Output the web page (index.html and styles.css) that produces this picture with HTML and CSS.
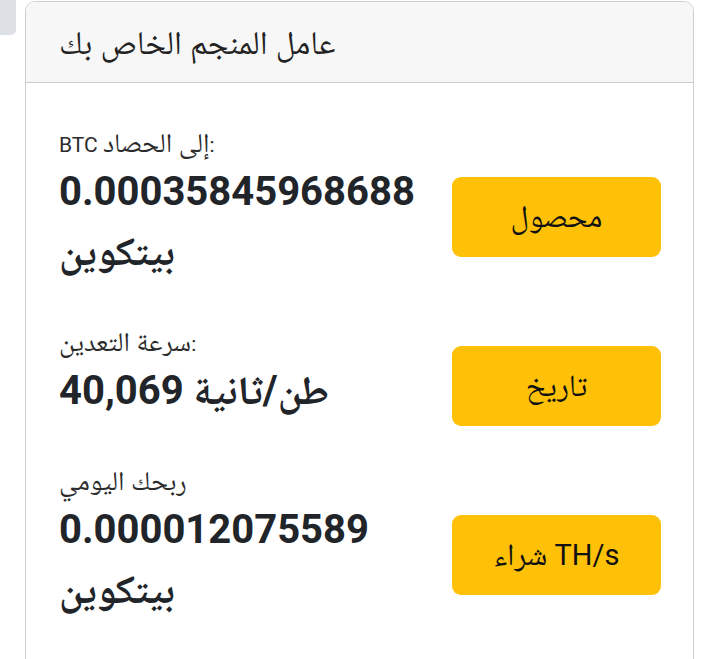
FILE: index.html
```html
<!DOCTYPE html>
<html lang="ar">
<head>
<meta charset="utf-8">
<link rel="stylesheet" href="styles.css">
</head>
<body>
<div class="page">
  <div class="stub"></div>
  <div class="card">
    <div class="card-header">
      <h5 class="card-title">عامل المنجم الخاص بك</h5>
    </div>
    <div class="card-body">
      <div class="row row-1">
        <div class="info">
          <div class="label">BTC <span class="ar">إلى الحصاد</span>:</div>
          <div class="value">0.00035845968688 بيتكوين</div>
        </div>
        <div class="action"><button class="btn"><span class="btn-text"><span class="ar">محصول</span></span></button></div>
      </div>
      <div class="row row-2">
        <div class="info">
          <div class="label"><span class="ar">سرعة التعدين</span>:</div>
          <div class="value">40,069 طن/ثانية</div>
        </div>
        <div class="action"><button class="btn"><span class="btn-text"><span class="ar">تاريخ</span></span></button></div>
      </div>
      <div class="row row-3">
        <div class="info">
          <div class="label"><span class="ar">ربحك اليومي</span></div>
          <div class="value">0.000012075589 بيتكوين</div>
        </div>
        <div class="action"><button class="btn"><span class="btn-text"><span class="ar">شراء</span> TH/s</span></button></div>
      </div>
    </div>
  </div>
</div>
</body>
</html>
```
FILE: styles.css
```css
html, body {
  margin: 0;
  padding: 0;
  background: #ffffff;
}
body {
  font-family: Roboto, "Noto Naskh Arabic", "Noto Sans Arabic", "DejaVu Sans", sans-serif;
  color: #212529;
  overflow: hidden;
  height: 659px;
}
.page {
  display: flex;
  align-items: flex-start;
  gap: 9px;
}
.stub {
  flex: 0 0 16px;
  height: 35px;
  background: #dde1e6;
  border-bottom-right-radius: 5px;
}
.card {
  flex: 0 0 669px;
  box-sizing: border-box;
  margin-top: 1px;
  border: 1px solid #cfcfcf;
  border-radius: 10px 10px 0 0;
  background: #ffffff;
  min-height: 700px;
}
.card-header {
  box-sizing: border-box;
  height: 81px;
  background: #f7f7f7;
  border-bottom: 1px solid #cbcbcb;
  border-radius: 9px 9px 0 0;
  padding: 1px 33px 0;
  display: flex;
  align-items: center;
}
.card-title {
  margin: 0;
  font-size: 33px;
  line-height: 40px;
  font-weight: 400;
  color: #222;
}
.card-body {
  padding: 45px 32px 0 33px;
  display: flex;
  flex-direction: column;
  gap: 45px;
}
.row {
  display: flex;
  align-items: center;
  justify-content: space-between;
}
.info {
  flex: 1 1 auto;
}
.label {
  font-size: 21px;
  line-height: 30px;
  height: 30px;
  margin-bottom: 4px;
  color: #2b2b2b;
}
.label .ar {
  font-size: 27px;
}
.value {
  font-size: 40px;
  line-height: 60px;
  font-weight: 700;
  color: #212529;
  width: 360px;
}
.row-2 .value {
  width: auto;
}
.action {
  flex: 0 0 auto;
  margin-top: 12px;
  margin-bottom: -12px;
}
.btn {
  display: flex;
  align-items: center;
  justify-content: center;
  width: 209px;
  height: 80px;
  border: 0;
  border-radius: 9px;
  background: #ffc107;
  color: #111;
  font-family: Roboto, "Noto Naskh Arabic", "Noto Sans Arabic", "DejaVu Sans", sans-serif;
  font-size: 29px;
  line-height: 40px;
  padding: 0;
}
.btn-text {
  white-space: nowrap;
}
.btn .ar {
  font-size: 31px;
}
```
